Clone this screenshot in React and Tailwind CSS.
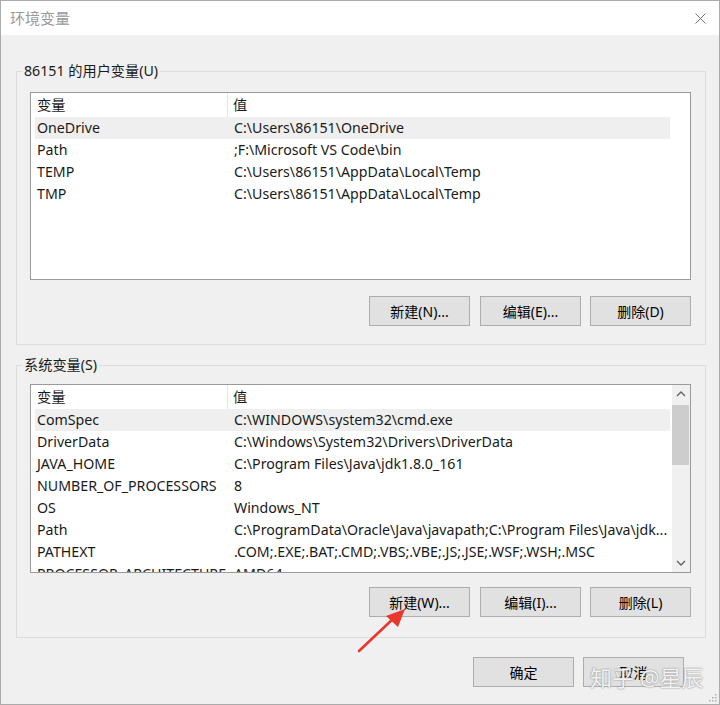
const userVars = [
  ['OneDrive', 'C:\\Users\\86151\\OneDrive'],
  ['Path', ';F:\\Microsoft VS Code\\bin'],
  ['TEMP', 'C:\\Users\\86151\\AppData\\Local\\Temp'],
  ['TMP', 'C:\\Users\\86151\\AppData\\Local\\Temp'],
]

const sysVars = [
  ['ComSpec', 'C:\\WINDOWS\\system32\\cmd.exe'],
  ['DriverData', 'C:\\Windows\\System32\\Drivers\\DriverData'],
  ['JAVA_HOME', 'C:\\Program Files\\Java\\jdk1.8.0_161'],
  ['NUMBER_OF_PROCESSORS', '8'],
  ['OS', 'Windows_NT'],
  ['Path', 'C:\\ProgramData\\Oracle\\Java\\javapath;C:\\Program Files\\Java\\jdk...'],
  ['PATHEXT', '.COM;.EXE;.BAT;.CMD;.VBS;.VBE;.JS;.JSE;.WSF;.WSH;.MSC'],
  ['PROCESSOR_ARCHITECTURE', 'AMD64'],
]

const Btn = ({ children, className = '' }) => (
  <button className={`h-[30px] w-[101px] border border-[#adadad] bg-[#e1e1e1] text-[14px] text-black ${className}`}>
    {children}
  </button>
)

const Header = () => (
  <div className="flex h-[24px] shrink-0 items-center bg-white">
    <div className="flex h-full w-[197px] items-center border-r border-[#e5e5e5] pl-[6px]">变量</div>
    <div className="pl-[5px]">值</div>
  </div>
)

const Rows = ({ items }) =>
  items.map(([k, v], i) => (
    <div
      key={k}
      className={`ml-[4px] flex h-[22px] w-[635px] shrink-0 items-center whitespace-nowrap ${i === 0 ? 'bg-[#efefef]' : ''}`}
    >
      <div className="w-[193px] overflow-hidden pl-[2px]">{k}</div>
      <div className="overflow-hidden pl-[6px]">{v}</div>
    </div>
  ))

const Chevron = ({ up }) => (
  <svg width="10" height="6" viewBox="0 0 10 6">
    <path d={up ? 'M1 5 L5 1 L9 5' : 'M1 1 L5 5 L9 1'} fill="none" stroke="#606060" strokeWidth="1.3" />
  </svg>
)

export default function App() {
  return (
    <div
      className="relative flex h-[705px] w-[720px] flex-col overflow-hidden border border-[#ababab] bg-[#f0f0f0] text-[14.2px] text-[#1a1a1a]"
      style={{ fontFamily: '"Noto Sans", "Noto Sans CJK SC", sans-serif' }}
    >
      <div className="flex h-[34px] shrink-0 items-center justify-between bg-white pl-[9px] pr-[13px]">
        <span className="text-[15px] text-[#9a9a9a]">环境变量</span>
        <svg width="11" height="11" viewBox="0 0 11 11">
          <path d="M0.5 0.5 L10.5 10.5 M10.5 0.5 L0.5 10.5" stroke="#707070" strokeWidth="1" />
        </svg>
      </div>

      <div className="flex flex-col pl-[15px] pr-[13px]">
        <fieldset className="mt-[26px] border border-[#dcdcdc]">
          <legend className="ml-[5px] px-[2px] leading-[20px]">86151 的用户变量(U)</legend>
          <div className="pl-[13px] pr-[14px] pb-[18px]">
            <div className="mt-[11px] flex h-[188px] flex-col border border-[#9a9a9a] bg-white">
              <Header />
              <Rows items={userVars} />
            </div>
            <div className="mt-[16px] flex justify-end">
              <Btn>新建(N)...</Btn>
              <Btn className="ml-[10px]">编辑(E)...</Btn>
              <Btn className="ml-[9px]">删除(D)</Btn>
            </div>
          </div>
        </fieldset>

        <fieldset className="mt-[10px] border border-[#dcdcdc]">
          <legend className="ml-[5px] px-[2px] leading-[20px]">系统变量(S)</legend>
          <div className="pl-[13px] pr-[14px] pb-[20px]">
            <div className="mt-[9px] flex h-[189px] border border-[#9a9a9a] bg-white">
              <div className="flex flex-1 flex-col overflow-hidden">
                <Header />
                <Rows items={sysVars} />
              </div>
              <div className="flex w-[18px] shrink-0 flex-col bg-[#f0f0f0]">
                <div className="flex h-[18px] items-center justify-center">
                  <Chevron up />
                </div>
                <div className="mt-[2px] h-[60px] w-[17px] bg-[#cdcdcd]" />
                <div className="flex-1" />
                <div className="flex h-[18px] items-center justify-center">
                  <Chevron />
                </div>
              </div>
            </div>
            <div className="mt-[14px] flex justify-end">
              <Btn>新建(W)...</Btn>
              <Btn className="ml-[10px]">编辑(I)...</Btn>
              <Btn className="ml-[9px]">删除(L)</Btn>
            </div>
          </div>
        </fieldset>

        <div className="mt-[19px] flex justify-end pr-[22px]">
          <Btn className="w-[100px]">确定</Btn>
          <Btn className="ml-[9px] w-[101px]">取消</Btn>
        </div>
      </div>

      <div
        className="absolute left-[589px] top-[661px] text-[22px] leading-[30px] text-white/90"
        style={{ textShadow: '0 0 1px #888, 0 0 2px #999' }}
      >
        知乎 @星辰
      </div>

      <svg className="absolute left-[350px] top-[602px]" width="60" height="56" viewBox="0 0 60 56">
        <path d="M8 48 L44 14" stroke="#e8382d" strokeWidth="2.6" strokeLinecap="round" />
        <path d="M54 6 L35 13 L47 24 Z" fill="#e8382d" />
      </svg>

      <svg className="absolute bottom-[2px] right-[2px]" width="10" height="10" viewBox="0 0 10 10">
        <g fill="#b0b0b0">
          <rect x="8" y="2" width="1.5" height="1.5" />
          <rect x="5" y="5" width="1.5" height="1.5" />
          <rect x="8" y="5" width="1.5" height="1.5" />
          <rect x="2" y="8" width="1.5" height="1.5" />
          <rect x="5" y="8" width="1.5" height="1.5" />
          <rect x="8" y="8" width="1.5" height="1.5" />
        </g>
      </svg>
    </div>
  )
}
